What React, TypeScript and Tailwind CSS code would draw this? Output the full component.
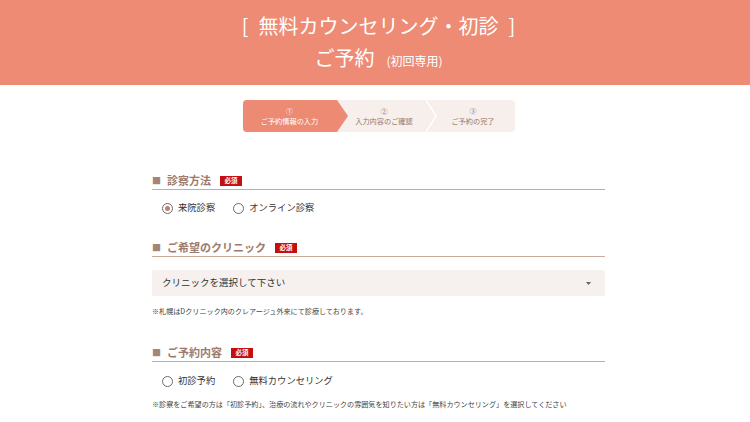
import React, { useState } from 'react';

const font = { fontFamily: '"Noto Sans CJK JP", "Noto Sans", sans-serif' };

const steps = [
  { num: '①', label: 'ご予約情報の入力' },
  { num: '②', label: '入力内容のご確認' },
  { num: '③', label: 'ご予約の完了' },
];

const Badge = () => (
  <span className="ml-[9px] inline-flex h-[10px] w-[22px] items-center justify-center bg-[#c20f12] text-[6.5px] font-bold leading-none text-white">
    必須
  </span>
);

const Heading = ({ title }: { title: string }) => (
  <div className="flex h-[17px] items-center border-b border-[#c9aa9c] pb-[1px]">
    <span className="mr-[6px] text-[9px] leading-none text-[#a58577]">■</span>
    <span className="text-[11px] font-bold leading-none text-[#9d7a6c]">{title}</span>
    <Badge />
  </div>
);

const Radio = ({ label, checked, onClick }: { label: string; checked: boolean; onClick: () => void }) => (
  <button onClick={onClick} className="flex items-center gap-[5px]">
    <span className="flex h-[11px] w-[11px] items-center justify-center rounded-full border border-[#6b6b6b] bg-white">
      {checked && <span className="h-[5px] w-[5px] rounded-full bg-[#b9826f]" />}
    </span>
    <span className="text-[9.3px] leading-none text-[#333]">{label}</span>
  </button>
);

export default function App() {
  const [method, setMethod] = useState('来院診察');
  const [kind, setKind] = useState('');

  return (
    <div className="min-h-[422px] bg-white" style={font}>
      {/* header */}
      <header className="flex h-[85px] flex-col items-center bg-[#ed8b75] pl-[7px] pt-[12px] text-white">
        <h1 className="flex text-[20px] leading-[28px]">
          <span className="mr-[10px]">[</span>
          無料カウンセリング・初診
          <span className="ml-[10px]">]</span>
        </h1>
        <p className="mt-[4px] flex items-baseline text-[20px] leading-[28px]">
          ご予約<span className="ml-[12px] text-[12px]">(初回専用)</span>
        </p>
      </header>

      <div className="pl-[7px]">
        {/* steps */}
        <div className="mx-auto mt-[15px] flex h-[32px] w-[272px] rounded-[4px] bg-[#f6efeb]">
          {steps.map((s, i) => (
            <div
              key={s.num}
              className={
                i === 0
                  ? 'relative flex w-[94px] flex-col items-center justify-center rounded-l-[4px] bg-[#ec8a73] text-white'
                  : 'relative flex flex-1 flex-col items-center justify-center pl-[6px] text-[#9b7668]'
              }
            >
              <span className="text-[7px] leading-[10px]">{s.num}</span>
              <span className="text-[7.2px] leading-[11px]">{s.label}</span>
              {i === 0 && (
                <svg className="absolute left-full top-0 z-10" width="11" height="32" viewBox="0 0 11 32">
                  <polygon points="0,0 11,16 0,32" fill="#ec8a73" />
                </svg>
              )}
              {i === 1 && (
                <svg className="absolute left-full top-0 z-10" width="11" height="32" viewBox="0 0 11 32">
                  <polyline points="0,0 10,16 0,32" fill="none" stroke="#ffffff" strokeWidth="1.5" />
                </svg>
              )}
            </div>
          ))}
        </div>

        <div className="mx-auto mt-[41px] w-[453px]">
          {/* section 1 */}
          <Heading title="診察方法" />
          <div className="mt-[10px] flex h-[16px] items-center gap-[18px] pl-[10px]">
            <Radio label="来院診察" checked={method === '来院診察'} onClick={() => setMethod('来院診察')} />
            <Radio label="オンライン診察" checked={method === 'オンライン診察'} onClick={() => setMethod('オンライン診察')} />
          </div>

          {/* section 2 */}
          <div className="mt-[24px]">
            <Heading title="ご希望のクリニック" />
          </div>
          <div className="mt-[13px] flex h-[26px] items-center justify-between rounded-[2px] bg-[#f6f1ee] pl-[10px] pr-[14px]">
            <span className="text-[9.5px] leading-none text-[#333]">クリニックを選択して下さい</span>
            <svg width="5" height="3" viewBox="0 0 5 3">
              <polygon points="0,0 5,0 2.5,3" fill="#666" />
            </svg>
          </div>
          <p className="mt-[10px] text-[7.1px] leading-[10px] text-[#444]">
            ※札幌はDクリニック内のクレアージュ外来にて診療しております。
          </p>

          {/* section 3 */}
          <div className="mt-[29px]">
            <Heading title="ご予約内容" />
          </div>
          <div className="mt-[11px] flex h-[16px] items-center gap-[18px] pl-[10px]">
            <Radio label="初診予約" checked={kind === '初診予約'} onClick={() => setKind('初診予約')} />
            <Radio label="無料カウンセリング" checked={kind === '無料カウンセリング'} onClick={() => setKind('無料カウンセリング')} />
          </div>
          <p className="mt-[10px] text-[7.1px] leading-[10px] text-[#444]">
            ※診察をご希望の方は「初診予約」、治療の流れやクリニックの雰囲気を知りたい方は「無料カウンセリング」を選択してください
          </p>
        </div>
      </div>
    </div>
  );
}
